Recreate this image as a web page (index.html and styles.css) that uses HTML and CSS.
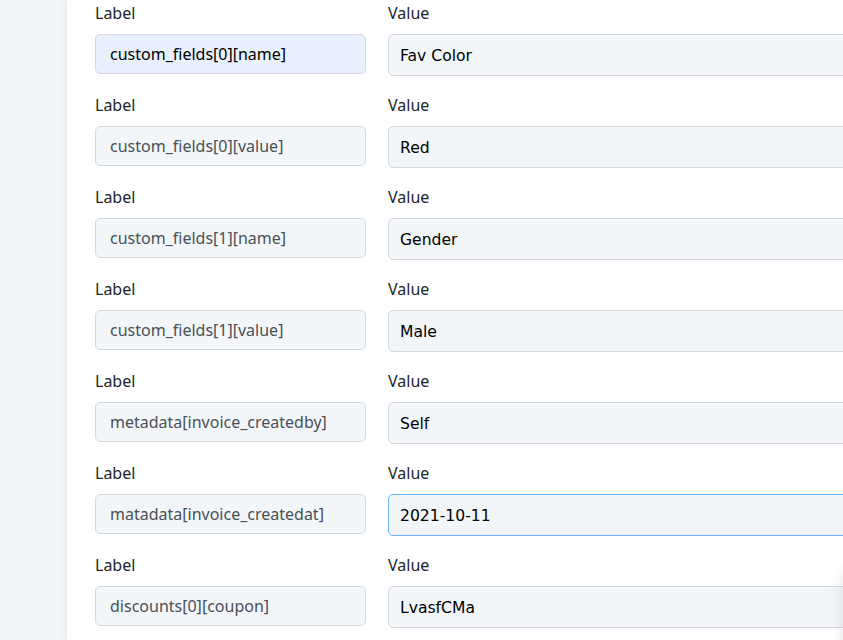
FILE: index.html
```html
<html>

<head>
    <meta charset="UTF-8">
    <meta name="viewport" content="width=device-width, initial-scale=1.0">
    <link rel="stylesheet" href="styles.css">
</head>

<body>
    <div class="page">
        <div class="card">
            <div class="row">
                <div class="field">
                    <label>Label</label>
                    <input type="text" class="key autofill" value="custom_fields[0][name]">
                </div>
                <div class="field">
                    <label>Value</label>
                    <input type="text" class="val" value="Fav Color">
                </div>
            </div>
            <div class="row">
                <div class="field">
                    <label>Label</label>
                    <input type="text" class="key" value="custom_fields[0][value]">
                </div>
                <div class="field">
                    <label>Value</label>
                    <input type="text" class="val" value="Red">
                </div>
            </div>
            <div class="row">
                <div class="field">
                    <label>Label</label>
                    <input type="text" class="key" value="custom_fields[1][name]">
                </div>
                <div class="field">
                    <label>Value</label>
                    <input type="text" class="val" value="Gender">
                </div>
            </div>
            <div class="row">
                <div class="field">
                    <label>Label</label>
                    <input type="text" class="key" value="custom_fields[1][value]">
                </div>
                <div class="field">
                    <label>Value</label>
                    <input type="text" class="val" value="Male">
                </div>
            </div>
            <div class="row">
                <div class="field">
                    <label>Label</label>
                    <input type="text" class="key" value="metadata[invoice_createdby]">
                </div>
                <div class="field">
                    <label>Value</label>
                    <input type="text" class="val" value="Self">
                </div>
            </div>
            <div class="row">
                <div class="field">
                    <label>Label</label>
                    <input type="text" class="key" value="matadata[invoice_createdat]">
                </div>
                <div class="field">
                    <label>Value</label>
                    <input type="text" class="val focus" value="2021-10-11">
                </div>
            </div>
            <div class="row">
                <div class="field">
                    <label>Label</label>
                    <input type="text" class="key" value="discounts[0][coupon]">
                </div>
                <div class="field">
                    <label>Value</label>
                    <input type="text" class="val" value="LvasfCMa">
                </div>
            </div>
        </div>
        <div class="widget"></div>
    </div>
</body>

</html>
```

FILE: styles.css
```css
body {
    margin: 0;
    background: #f3f6f9;
    overflow: hidden;
    font-family: "Noto Sans", sans-serif;
    color: #212529;
}
.page {
    padding-left: 67px;
    height: 640px;
    position: relative;
    overflow: hidden;
}
.card {
    height: 640px;
    background: #fff;
    box-shadow: 0 0 8px rgba(0, 0, 0, .07);
    padding: 1px 0 0 28px;
    box-sizing: border-box;
    overflow: hidden;
}
.row {
    display: grid;
    grid-template-columns: 271px 500px;
    column-gap: 22px;
    height: 92px;
}
.field {
    display: flex;
    flex-direction: column;
    align-items: stretch;
}
label {
    font-size: 16px;
    line-height: 24px;
    margin-bottom: 9px;
}
input {
    box-sizing: border-box;
    border: 1px solid #d5d8e0;
    border-radius: 5px;
    background: #f3f6f9;
    outline: none;
}
.key {
    height: 40px;
    padding: 0 14px;
    font-family: "Noto Sans", sans-serif;
    font-size: 16px;
    color: #495057;
}
.key.autofill {
    background: #e8f0fe;
    color: #000;
}
.val {
    height: 42px;
    padding: 2px 11px 0;
    font-family: "DejaVu Sans", sans-serif;
    font-size: 15.6px;
    color: #000;
}
.val.focus {
    border-color: #69b4ff;
}
.widget {
    position: absolute;
    left: 843px;
    top: 570px;
    width: 60px;
    height: 200px;
    border-radius: 8px;
    background: #fff;
    box-shadow: 0 0 16px rgba(0, 0, 0, .1);
}
```
